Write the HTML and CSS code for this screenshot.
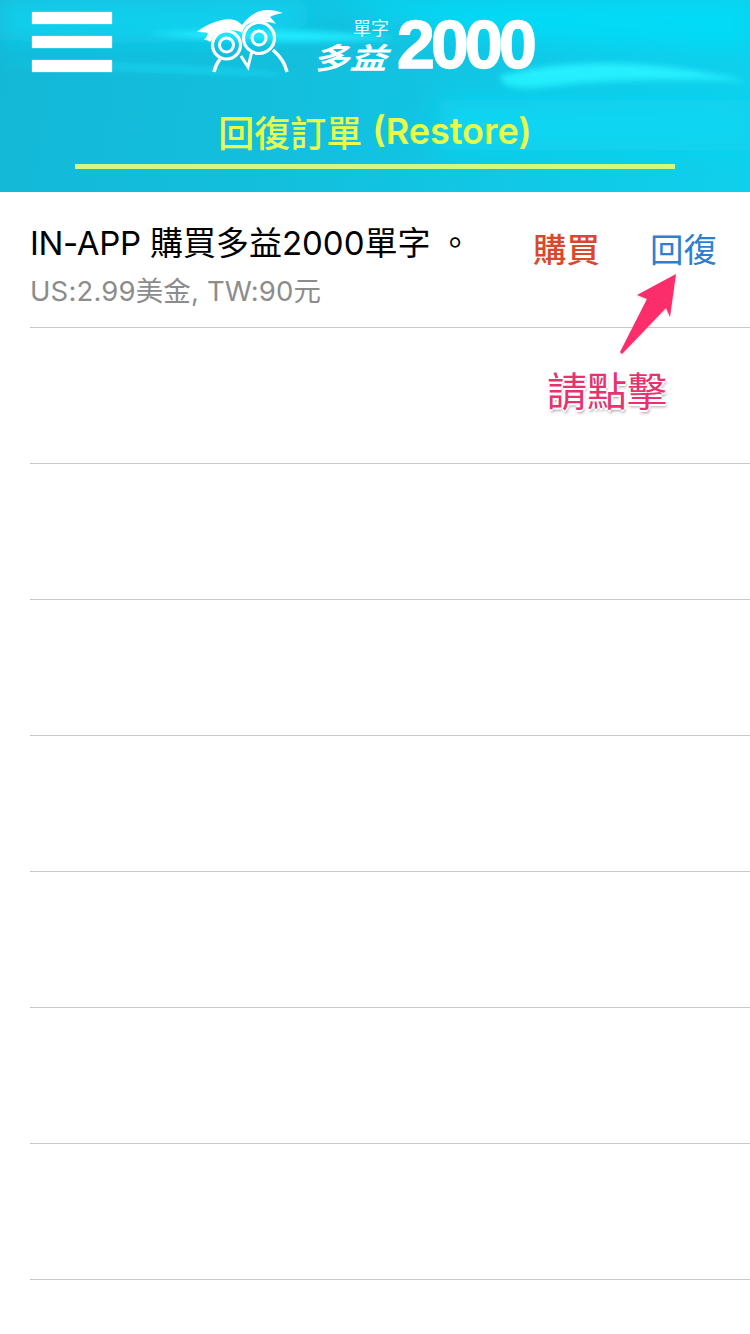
FILE: index.html
```html
<!DOCTYPE html>
<html lang="zh-Hant">
<head>
<meta charset="utf-8">
<title>回復訂單</title>
<link rel="stylesheet" href="styles.css">
</head>
<body>
<div class="page">
  <header class="header">
    <svg class="waves" viewBox="0 0 750 192" preserveAspectRatio="none" aria-hidden="true">
      <defs>
        <filter id="soft" x="-10%" y="-50%" width="120%" height="200%"><feGaussianBlur stdDeviation="3"/></filter>
        <filter id="softer" x="-10%" y="-50%" width="120%" height="200%"><feGaussianBlur stdDeviation="14"/></filter>
      </defs>
      <path d="M300 0H750V50C640 40 540 50 420 24C380 14 340 10 300 0Z" fill="#06dcf8" filter="url(#softer)"/>
      <path d="M0 0H300C340 30 300 50 0 40Z" fill="#0ed2ef" filter="url(#softer)"/>
      <path d="M145 34C230 26 320 30 400 38C320 44 230 42 145 34Z" fill="#20eaff" filter="url(#soft)"/>
      <path d="M0 64C90 68 200 74 300 76C240 66 100 62 0 64Z" fill="#12d4ef" filter="url(#soft)"/>
      <path d="M500 76C570 58 650 58 750 82C680 78 590 80 540 88C510 90 500 84 500 76Z" fill="#28f0ff" filter="url(#soft)"/>
      <path d="M440 100H750V150H440Z" fill="#0bd6f2" filter="url(#softer)"/>
    </svg>
    <div class="topbar">
      <div class="menu" aria-label="menu"><span class="bar"></span><span class="bar"></span><span class="bar"></span></div>
      <div class="logo">
        <svg class="owl" viewBox="0 0 96 66" aria-hidden="true">
          <g fill="none" stroke="#fff">
            <circle cx="31.5" cy="38" r="14" stroke-width="3.2"/>
            <circle cx="31.5" cy="38" r="7" stroke-width="3"/>
            <circle cx="64" cy="31" r="15.5" stroke-width="3.2"/>
            <circle cx="64" cy="31" r="7" stroke-width="3"/>
            <path d="M19 65C20 60 22 56 25 52" stroke-width="3.5"/>
            <path d="M92 65C90 56 85 49 78 43" stroke-width="3.5"/>
            <path d="M46 49L53 60L57 44" stroke-width="3"/>
          </g>
          <path fill="#fff" d="M2 25C8 20 14 17 20 15C27 12 36 11 42 14C44 15 46 17 47 18C51 12 57 7 65 4C72 2 80 3 88 6C82 7 78 8 75 10C77 12 79 14 81 17C76 15 72 15 70 16C66 14 60 14 55 16C51 18 48 22 47 26C43 23 37 23 32 23C26 23 21 26 18 30C17 32 16 34 15 35C13 33 11 33 9 33C11 31 12 29 13 26C9 25 5 25 2 25Z"/>
        </svg>
        <div class="wordmark">
          <div class="word-cjk">
            <span class="word-small">單字</span>
            <span class="word-big">多益</span>
          </div>
          <span class="word-num">2000</span>
        </div>
      </div>
    </div>
    <h1 class="title"><span class="title-cjk">回復訂單</span><span class="title-latin">(Restore)</span></h1>
    <div class="rule"></div>
  </header>

  <ul class="list">
    <li class="row">
      <div class="row-text">
        <div class="row-title"><span class="tight">IN-APP</span> 購買多益2000單字<span class="stop">。</span></div>
        <div class="row-sub">US:2.99美金, TW:90元</div>
      </div>
      <div class="row-actions">
        <span class="act act-buy">購買</span>
        <span class="act act-restore">回復</span>
      </div>
    </li>
    <li class="row"></li>
    <li class="row"></li>
    <li class="row"></li>
    <li class="row"></li>
    <li class="row"></li>
    <li class="row"></li>
    <li class="row"></li>
  </ul>

  <svg class="arrow" viewBox="0 0 70 90" aria-hidden="true">
    <path fill="#fb2d6b" d="M56 4L50 47L46 38L2 84L0 82L27 29L17 25Z"/>
  </svg>
  <div class="callout">請點擊</div>
</div>
</body>
</html>
```
FILE: styles.css
```css
* { box-sizing: border-box; }
html, body { margin: 0; padding: 0; background: #fff; }
body { font-family: Inter, "Noto Sans CJK TC", sans-serif; }
.page { position: relative; width: 750px; height: 1334px; overflow: hidden; background: #fff; }

.header {
  position: relative;
  height: 192px;
  padding-top: 8px;
  overflow: hidden;
  background: linear-gradient(100deg, #14b8d7 0%, #13bfdd 40%, #11c8e6 70%, #0fd0ec 100%);
}
.waves { position: absolute; left: 0; top: 0; width: 750px; height: 192px; }

.topbar { position: relative; display: flex; align-items: flex-start; height: 72px; padding-left: 32px; }
.menu { display: flex; flex-direction: column; gap: 12px; width: 80px; margin-top: 4px; }
.bar { display: block; height: 12px; background: #fff; box-shadow: 0 0 1px rgba(255,255,255,.8); }

.logo { display: flex; align-items: flex-start; margin-left: 83px; }
.owl { display: block; width: 96px; height: 66px; margin-top: -1px; }
.wordmark { display: flex; align-items: flex-start; margin-left: 26px; }
.word-cjk { display: flex; flex-direction: column; align-items: flex-end; width: 74px; }
.word-small { font-family: "Noto Sans CJK TC", sans-serif; font-size: 18px; line-height: 20px; color: #e6fbff; margin: 9px 2px 0 0; }
.word-big {
  font-family: "Noto Sans CJK TC", sans-serif;
  font-size: 37px; font-weight: 700; line-height: 36px; color: #fff;
  transform: skewX(-20deg) scaleY(.8);
  margin-top: 1px;
}
.word-num {
  font-family: "Liberation Sans", sans-serif;
  font-size: 68px; font-weight: 700; line-height: 64px; color: #fff;
  letter-spacing: -3.8px;
  -webkit-text-stroke: 1.5px #fff;
  margin-left: 6px;
  margin-top: 4px;
}

.title {
  position: relative;
  margin: 28px 0 0;
  height: 46px;
  display: flex; justify-content: center; align-items: center; gap: 10px;
  font-size: 36px; line-height: 46px; font-weight: 400;
  color: #e8fb4a;
  white-space: nowrap;
}
.title-cjk { font-family: "Noto Sans CJK TC", sans-serif; font-weight: 500; }
.title-latin { font-family: Inter, sans-serif; font-weight: 600; font-size: 36px; }
.rule { position: relative; width: 600px; height: 5px; margin: 10px 0 0 75px; background: #d5f780; }

.list { list-style: none; margin: 0; padding: 0 0 0 30px; }
.row {
  height: 136px;
  display: flex; align-items: flex-start; justify-content: space-between;
  border-bottom: 1px solid #c8c8c8;
}
.row-text { padding-top: 29px; }
.row-title { font-size: 33px; line-height: 44px; color: #000; white-space: nowrap; }
.tight { letter-spacing: -.35px; }
.stop { display: inline-block; margin-left: 8px; }
.row-sub { font-size: 27.5px; line-height: 36px; color: #8c8c8c; white-space: nowrap; margin-top: 8px; letter-spacing: .15px; }
.row-actions { display: flex; gap: 50px; padding: 33px 33px 0 0; }
.act { font-family: "Noto Sans CJK TC", sans-serif; font-size: 33.5px; line-height: 46px; font-weight: 500; }
.act-buy { color: #d9482c; }
.act-restore { color: #2f7fd0; font-weight: 400; }

.arrow { position: absolute; left: 620px; top: 270px; width: 70px; height: 90px; filter: drop-shadow(0 1px 1px rgba(0,0,0,.15)); }
.callout {
  position: absolute; left: 547px; top: 361px;
  font-family: "Noto Sans CJK TC", sans-serif;
  font-size: 40px; line-height: 56px; font-weight: 400;
  color: #e8326f;
  white-space: nowrap;
  text-shadow: 2px 0 0 #fff, -2px 0 0 #fff, 0 2px 0 #fff, 0 -2px 0 #fff, 1px 3px 3px rgba(0,0,0,.4);
}
```
